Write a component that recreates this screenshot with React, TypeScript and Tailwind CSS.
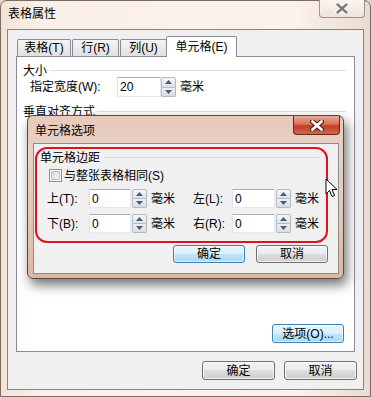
import React from "react";

function Spinner({ cls }: { cls: string }) {
  return (
    <div className={`flex flex-col w-[15px] ${cls}`}>
      <div className="flex-1 flex items-center justify-center border border-[#b3bac6] rounded-t-[2px] bg-[linear-gradient(#f5f7fa,#dde3ea)]">
        <svg width="7" height="4" viewBox="0 0 7 4">
          <path d="M0 4 L3.5 0 L7 4 Z" fill="#4b5b7c" />
        </svg>
      </div>
      <div className="flex-1 flex items-center justify-center border border-t-0 border-[#b3bac6] rounded-b-[2px] bg-[linear-gradient(#eef1f5,#d7dde6)]">
        <svg width="7" height="4" viewBox="0 0 7 4">
          <path d="M0 0 L3.5 4 L7 0 Z" fill="#4b5b7c" />
        </svg>
      </div>
    </div>
  );
}

function Input({ value, cls }: { value: string; cls: string }) {
  return (
    <div
      className={`flex items-center bg-white border border-[#abadb3] border-l-[#dfe2e8] border-b-[#e3e9ef] border-r-[#e3e9ef] pl-[2px] ${cls}`}
    >
      {value}
    </div>
  );
}

function Btn({ label, focus, cls }: { label: string; focus?: boolean; cls: string }) {
  return (
    <div
      className={`flex items-center justify-center rounded-[3px] border ${
        focus
          ? "border-[#3c7fb1] bg-[linear-gradient(#eaf6fd_0%,#d9f0fc_50%,#bee6fd_50%,#a7d9f5_100%)] shadow-[inset_0_0_0_1px_rgba(255,255,255,0.6)]"
          : "border-[#707070] bg-[linear-gradient(#f2f2f2_0%,#ebebeb_50%,#dddddd_50%,#cfcfcf_100%)] shadow-[inset_0_0_0_1px_rgba(255,255,255,0.7)]"
      } ${cls}`}
    >
      {label}
    </div>
  );
}

export default function App() {
  return (
    <div className="relative w-[371px] h-[397px] overflow-hidden bg-[#e4d6ca] font-['Liberation_Sans','Noto_Sans_CJK_SC',sans-serif] text-[12px] leading-[14px] text-black">
      {/* Outer window */}
      <div className="flex flex-col w-[371px] h-[397px] rounded-t-[7px] border border-[#7a6c62] bg-[linear-gradient(90deg,#f3e3d6,#faf0e7_10%,#fbf2ea_80%,#eadbd0)]">
        {/* title bar */}
        <div className="flex h-[28px] items-start">
          <span className="ml-[7px] mt-[6px]">表格属性</span>
          <div className="ml-auto mr-[5px] -mt-px w-[46px] h-[18px] flex items-center justify-center rounded-b-[4px] border border-t-0 border-[#9d928a] bg-[linear-gradient(#fbf5f0,#efe3da)]">
            <svg width="14" height="11" viewBox="0 0 14 11">
              <path d="M2.5 1.5 L11.5 9.5 M11.5 1.5 L2.5 9.5" stroke="#ffffff" strokeWidth="4.6" strokeLinecap="round" />
              <path d="M2.5 1.5 L11.5 9.5 M11.5 1.5 L2.5 9.5" stroke="#7b7b7b" strokeWidth="2.4" strokeLinecap="round" />
            </svg>
          </div>
        </div>

        {/* client area */}
        <div className="mx-[6px] h-[361px] flex flex-col border border-[#8a847f] bg-[#f0f0f0]">
          {/* tabs */}
          <div className="relative z-10 flex items-end h-[21px] mt-[6px] ml-[9px] -mb-px">
            <div className="mb-px w-[54px] h-[17px] flex items-center justify-center border border-b-0 border-[#898c95] rounded-t-[2px] bg-[linear-gradient(#f4f4f4,#e1e1e1)]">
              表格(T)
            </div>
            <div className="mb-px ml-[1px] w-[47px] h-[17px] flex items-center justify-center border border-b-0 border-[#898c95] rounded-t-[2px] bg-[linear-gradient(#f4f4f4,#e1e1e1)]">
              行(R)
            </div>
            <div className="mb-px ml-[1px] w-[47px] h-[17px] flex items-center justify-center border border-b-0 border-[#898c95] rounded-t-[2px] bg-[linear-gradient(#f4f4f4,#e1e1e1)]">
              列(U)
            </div>
            <div className="ml-[-1px] w-[71px] h-[21px] flex items-start justify-center pt-[3px] border border-b-0 border-[#898c95] rounded-t-[2px] bg-white">
              单元格(E)
            </div>
          </div>

          {/* tab panel */}
          <div className="ml-[8px] w-[339px] h-[296px] flex flex-col border border-[#898c95] bg-white">
            <div className="flex items-center h-[13px] mt-[7px] ml-[6px] mr-[8px]">
              <span>大小</span>
              <div className="flex-1 h-px bg-[#d5dfe5] ml-[3px]" />
            </div>
            <div className="flex items-center h-[20px] ml-[13px]">
              <span className="w-[87px]">指定宽度(W):</span>
              <Input value="20" cls="w-[44px] h-[20px]" />
              <Spinner cls="h-[20px]" />
              <span className="ml-[4px]">毫米</span>
            </div>
            <div className="flex items-center h-[13px] mt-[8px] ml-[6px] mr-[8px]">
              <span>垂直对齐方式</span>
              <div className="flex-1 h-px bg-[#d5dfe5] ml-[2px]" />
            </div>
            <div className="flex-1" />
            <div className="flex justify-end mr-[10px] mb-[8px]">
              <Btn label="选项(O)..." focus cls="w-[72px] h-[19px]" />
            </div>
          </div>

          {/* bottom buttons */}
          <div className="flex justify-end gap-[9px] mt-[9px] mr-[6px]">
            <Btn label="确定" cls="w-[73px] h-[19px]" />
            <Btn label="取消" cls="w-[73px] h-[19px]" />
          </div>
        </div>
      </div>

      {/* Inner dialog (overlay window) */}
      <div className="absolute left-[27px] top-[115px] z-20 w-[317px] h-[164px] flex flex-col rounded-[6px] border border-[#5a4840] bg-[linear-gradient(#e6cabc,#e9d2c4_25%,#e2c5b3_70%,#d9b7a2)] shadow-[3px_6px_12px_rgba(0,0,0,0.55)]">
        <div className="flex h-[27px] items-start">
          <span className="ml-[7px] mt-[8px]">单元格选项</span>
          <div className="ml-auto mr-[3px] w-[47px] h-[19px] flex items-center justify-center rounded-b-[4px] border border-t-0 border-[#5e2a1e] bg-[linear-gradient(#eaa999_0%,#d9725d_45%,#c23c24_55%,#d4644a_100%)]">
            <svg width="14" height="11" viewBox="0 0 14 11">
              <path d="M2.5 1.5 L11.5 9.5 M11.5 1.5 L2.5 9.5" stroke="#4a1c12" strokeWidth="4.8" strokeLinecap="round" />
              <path d="M2.5 1.5 L11.5 9.5 M11.5 1.5 L2.5 9.5" stroke="#ffffff" strokeWidth="2.8" strokeLinecap="round" />
            </svg>
          </div>
        </div>

        <div className="relative ml-[5px] w-[306px] h-[131px] flex flex-col border border-[#8c8c8c] bg-[#f0f0f0]">
          {/* red annotation */}
          <div className="absolute left-[1px] top-[3px] w-[293px] h-[96px] rounded-[12px] border-[2.5px] border-[#e0121c]" />

          <div className="flex items-center h-[13px] mt-[7px] ml-[6px] mr-[18px]">
            <span>单元格边距</span>
            <div className="flex-1 h-px bg-[#d5dfe5] ml-[4px]" />
          </div>
          <div className="flex items-center h-[13px] mt-[5px] ml-[15px]">
            <div className="w-[13px] h-[13px] border border-[#8e8f8f] bg-white p-[1px]">
              <div className="w-full h-full border border-[#c0c0c0] bg-[linear-gradient(135deg,#d6d6d6,#f6f6f6)]" />
            </div>
            <span className="ml-[2px]">与整张表格相同(S)</span>
          </div>
          <div className="flex items-center h-[19px] mt-[7px] ml-[13px]">
            <span className="w-[42px]">上(T):</span>
            <Input value="0" cls="w-[42px] h-[19px]" />
            <div className="ml-[1px]">
              <Spinner cls="h-[19px]" />
            </div>
            <span className="ml-[4px] w-[42px]">毫米</span>
            <span className="w-[39px]">左(L):</span>
            <Input value="0" cls="w-[43px] h-[19px]" />
            <div className="ml-[1px]">
              <Spinner cls="h-[19px]" />
            </div>
            <span className="ml-[4px]">毫米</span>
          </div>
          <div className="flex items-center h-[19px] mt-[6px] ml-[13px]">
            <span className="w-[42px]">下(B):</span>
            <Input value="0" cls="w-[42px] h-[19px]" />
            <div className="ml-[1px]">
              <Spinner cls="h-[19px]" />
            </div>
            <span className="ml-[4px] w-[42px]">毫米</span>
            <span className="w-[39px]">右(R):</span>
            <Input value="0" cls="w-[43px] h-[19px]" />
            <div className="ml-[1px]">
              <Spinner cls="h-[19px]" />
            </div>
            <span className="ml-[4px]">毫米</span>
          </div>
          <div className="flex justify-end gap-[11px] mt-[12px] mr-[10px]">
            <Btn label="确定" focus cls="w-[72px] h-[18px]" />
            <Btn label="取消" cls="w-[72px] h-[18px]" />
          </div>
        </div>
      </div>

      {/* mouse cursor */}
      <svg className="absolute left-[325px] top-[178px] z-30" width="13" height="20" viewBox="0 0 13 20">
        <path d="M1 1 L1 16 L4.5 12.5 L7 18.5 L9.5 17.5 L7 11.5 L12 11.5 Z" fill="#ffffff" stroke="#000000" strokeWidth="1" strokeLinejoin="round" />
      </svg>
    </div>
  );
}
